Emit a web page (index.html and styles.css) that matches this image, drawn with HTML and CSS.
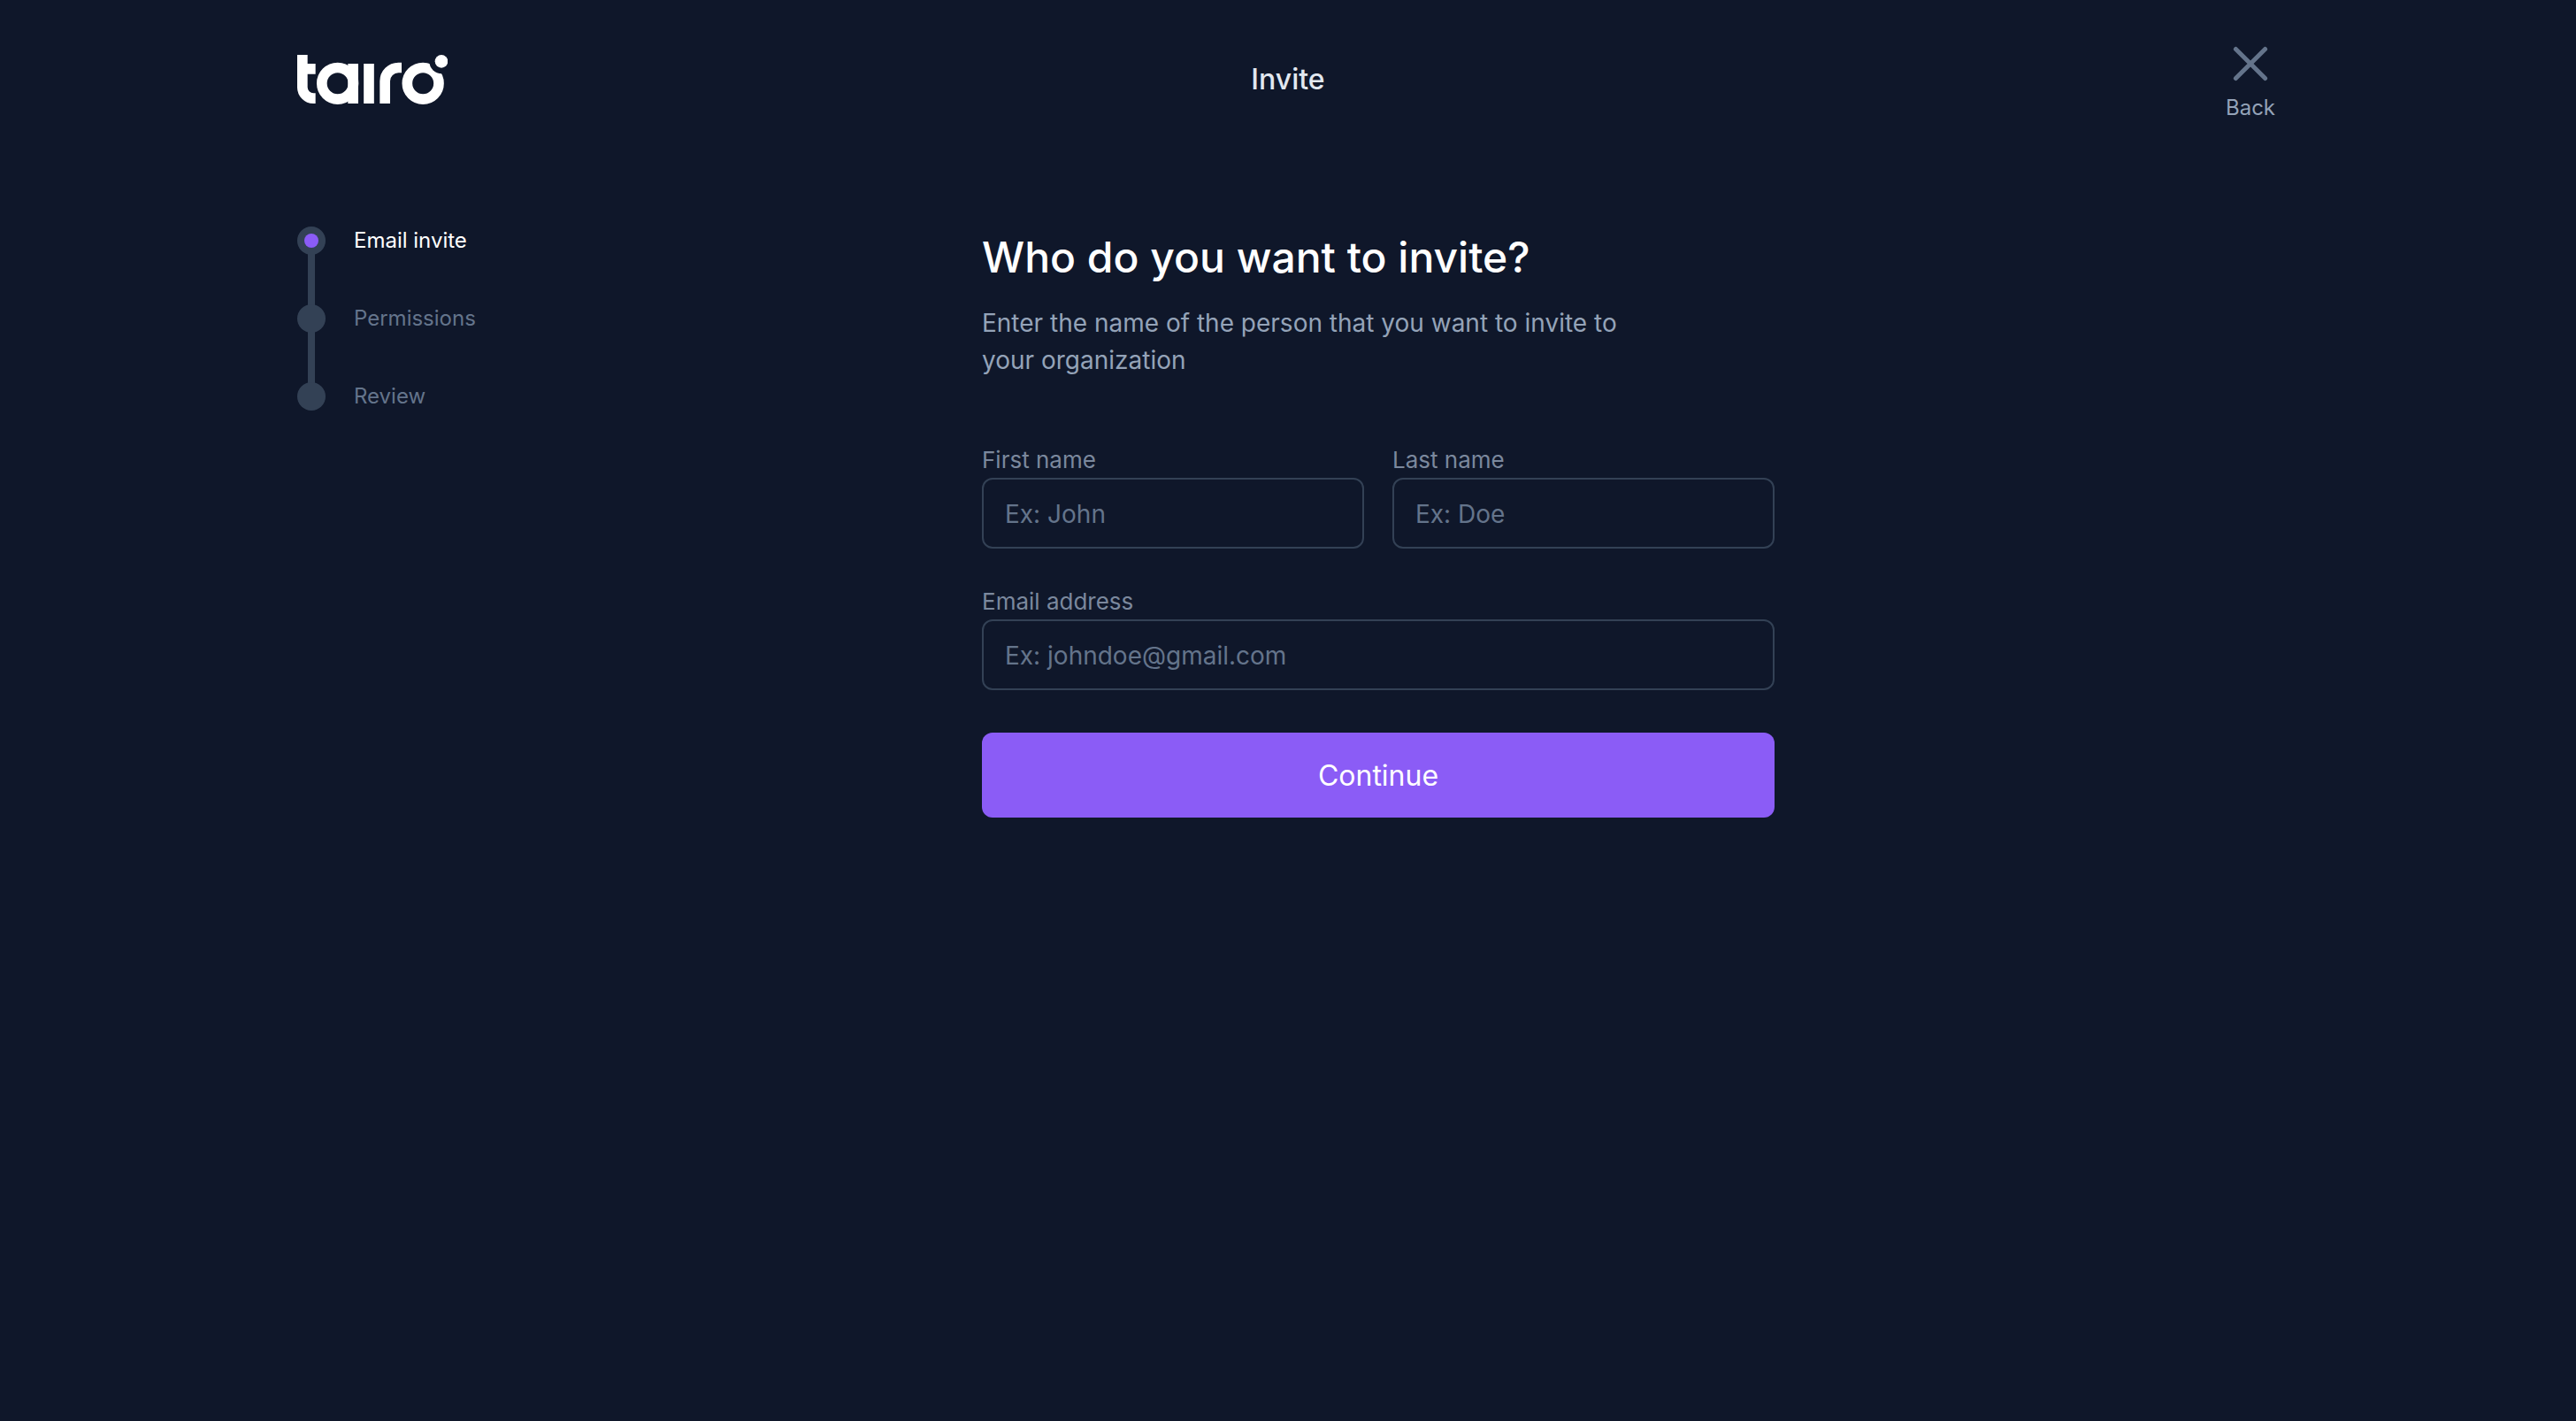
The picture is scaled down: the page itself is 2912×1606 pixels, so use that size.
FILE: index.html
```html
<!DOCTYPE html>
<html lang="en">
<head>
  <meta charset="utf-8">
  <meta name="viewport" content="width=device-width, initial-scale=1">
  <title>Invite</title>
  <link rel="stylesheet" href="styles.css">
</head>
<body>
  <div class="container">
    <header class="header">
      <a class="logo" href="#" aria-label="tairo">
        <svg class="logo-mark" viewBox="48 36 510 168" fill="none" stroke="currentColor" stroke-width="35" aria-hidden="true">
          <mask id="notch" maskUnits="userSpaceOnUse" x="390" y="30" width="180" height="180">
            <rect x="390" y="30" width="180" height="180" fill="#fff" stroke="none"/>
            <circle cx="538" cy="58" r="42" fill="#000" stroke="none"/>
          </mask>
          <path d="M65.500 36V145A38 38 0 0 0 103 183.500H110M65 83.500H110"/>
          <circle cx="185" cy="133" r="53.500"/>
          <path d="M237.500 66V201M291 66V201"/>
          <path d="M345.500 201V125A46 46 0 0 1 391 79.500H402"/>
          <circle cx="474.500" cy="133" r="53.500" mask="url(#notch)"/>
          <circle cx="537" cy="58" r="22" fill="currentColor" stroke="none"/>
        </svg>
      </a>
      <p class="header-title">Invite</p>
      <button class="back" type="button">
        <svg class="back-icon" viewBox="0 0 24 24" fill="none" stroke="currentColor" stroke-width="2.500" stroke-linecap="round" aria-hidden="true">
          <path d="M3.700 3.700 20.300 20.300M20.300 3.700 3.700 20.300"/>
        </svg>
        <span>Back</span>
      </button>
    </header>

    <div class="layout">
      <ol class="steps">
        <li class="step step-active" aria-current="step"><span class="step-dot"></span>Email invite</li>
        <li class="step"><span class="step-dot"></span>Permissions</li>
        <li class="step"><span class="step-dot"></span>Review</li>
      </ol>

      <main class="main">
        <form class="form">
          <h1 class="title">Who do you want to invite?</h1>
          <p class="intro">Enter the name of the person that you want to invite to your organization</p>
          <div class="fields">
            <div class="field">
              <label for="first-name">First name</label>
              <input id="first-name" type="text" placeholder="Ex: John">
            </div>
            <div class="field">
              <label for="last-name">Last name</label>
              <input id="last-name" type="text" placeholder="Ex: Doe">
            </div>
            <div class="field field-wide">
              <label for="email">Email address</label>
              <input id="email" type="email" placeholder="Ex: johndoe@gmail.com">
            </div>
          </div>
          <button class="submit" type="submit">Continue</button>
        </form>
      </main>
    </div>
  </div>
</body>
</html>
```
FILE: styles.css
```css
*,
*::before,
*::after {
  box-sizing: border-box;
}

body {
  margin: 0;
  min-height: 100vh;
  background: #0f172a;
  color: #fff;
  font-family: Inter, "Liberation Sans", sans-serif;
  font-size: 28px;
}

button,
input {
  font: inherit;
}

.container {
  max-width: 2304px;
  margin: 0 auto;
  padding: 0 32px;
}

.header {
  display: grid;
  grid-template-columns: 1fr auto 1fr;
  align-items: center;
  height: 180px;
}

.logo {
  justify-self: start;
  color: #fff;
}

.logo-mark {
  display: block;
  width: 170px;
  height: 56px;
}

.header-title {
  margin: 0;
  color: #e2e8f0;
  font-size: 32px;
  font-weight: 500;
  line-height: 48px;
}

.back {
  display: flex;
  flex-direction: column;
  align-items: center;
  justify-self: end;
  width: 64px;
  padding: 8px 0 0;
  border: 0;
  background: none;
  color: #94a3b8;
  font-size: 24px;
  line-height: 36px;
  cursor: pointer;
}

.back-icon {
  width: 48px;
  height: 48px;
  margin-bottom: 8px;
  color: #64748b;
}

.layout {
  display: flex;
  align-items: flex-start;
  padding-top: 76px;
}

.steps {
  display: flex;
  flex-direction: column;
  gap: 56px;
  width: 204px;
  margin: 0;
  padding: 0;
  list-style: none;
}

.step {
  position: relative;
  display: flex;
  align-items: center;
  gap: 32px;
  height: 32px;
  color: #64748b;
  font-size: 24px;
  line-height: 32px;
}

.step-active {
  color: #fff;
}

.step-dot {
  display: grid;
  place-items: center;
  width: 32px;
  height: 32px;
  border-radius: 50%;
  background: #334155;
}

.step-active .step-dot::after {
  content: "";
  width: 16px;
  height: 16px;
  border-radius: 50%;
  background: #8b5cf6;
}

/* Rail joining each dot to the next one */
.step:not(:last-child)::before {
  content: "";
  position: absolute;
  top: 31px;
  left: 12px;
  width: 8px;
  height: 58px;
  background: #334155;
}

.main {
  flex: 1;
  padding-bottom: 64px;
}

.form {
  max-width: 896px;
  margin: 0 auto;
}

.title {
  margin: 0 0 18px;
  font-size: 48px;
  font-weight: 500;
  line-height: 70px;
}

.intro {
  max-width: 768px;
  margin: 0 0 72px;
  color: #94a3b8;
  font-size: 28px;
  line-height: 42px;
}

.fields {
  display: grid;
  grid-template-columns: 1fr 1fr;
  gap: 40px 32px;
}

.field {
  display: flex;
  flex-direction: column;
}

.field-wide {
  grid-column: 1 / -1;
}

.field label {
  color: #7b889d;
  font-size: 26px;
  line-height: 40px;
}

.field input {
  width: 100%;
  height: 80px;
  padding: 2px 24px 0;
  border: 2px solid #334155;
  border-radius: 12px;
  outline: none;
  background: transparent;
  color: #e2e8f0;
  font-size: 28px;
}

.field input:focus {
  border-color: #8b5cf6;
}

.field input::placeholder {
  color: #64748b;
  opacity: 1;
}

.submit {
  display: block;
  width: 100%;
  height: 96px;
  margin-top: 48px;
  border: 0;
  border-radius: 12px;
  background: #8b5cf6;
  color: #fff;
  font-size: 32px;
  cursor: pointer;
}
```
